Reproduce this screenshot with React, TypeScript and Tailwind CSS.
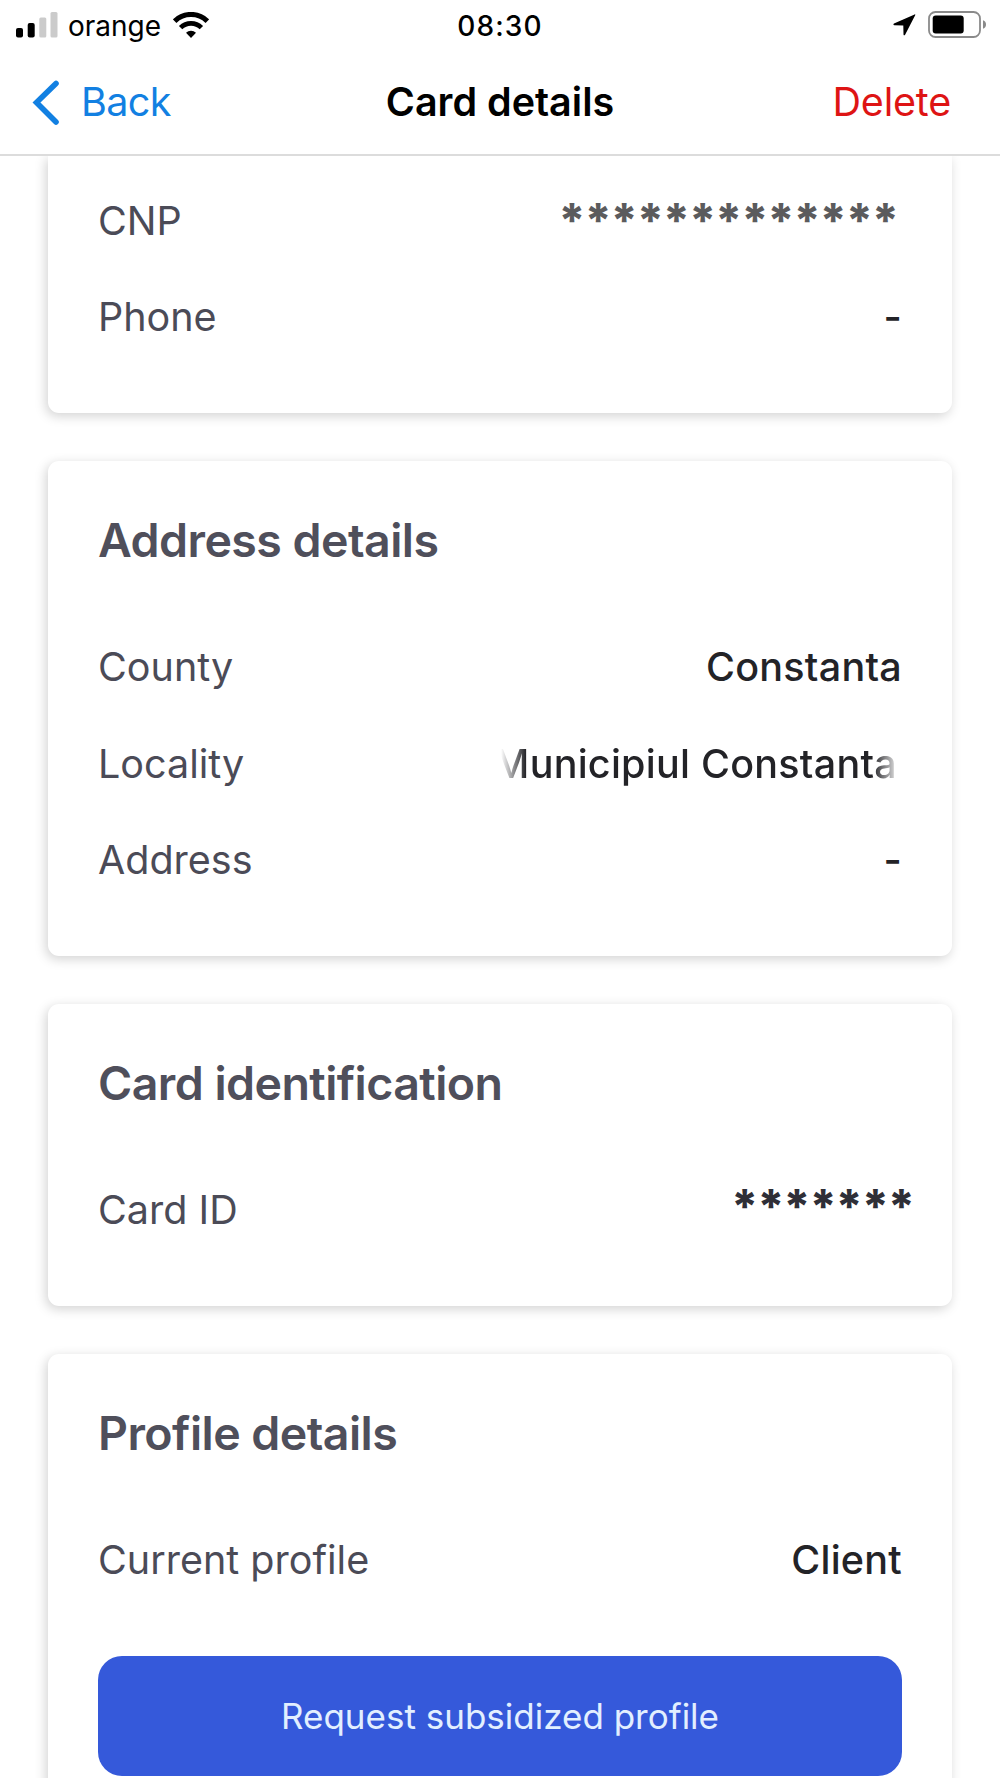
import type { ReactNode } from "react";

interface DetailRowProps {
  label: string;
  children: ReactNode;
}

function SignalIcon() {
  return (
    <svg width="42" height="26" viewBox="0 0 42 26">
      <rect x="0" y="16" width="7" height="9.5" rx="2" fill="#000" />
      <rect x="11.7" y="11" width="7" height="14.5" rx="2" fill="#000" />
      <rect x="23.3" y="5.5" width="7" height="20" rx="1.5" fill="#cbcbcb" />
      <rect x="34.5" y="0" width="7" height="25.5" rx="1.5" fill="#cbcbcb" />
    </svg>
  );
}

function WifiIcon() {
  return (
    <svg width="36" height="27" viewBox="0 0 36 27" fill="none" stroke="#000">
      <path d="M1.6 9.2a23.4 23.4 0 0 1 32.8 0" strokeWidth="5.2" />
      <path d="M7.6 15.6a14.8 14.8 0 0 1 20.8 0" strokeWidth="4.8" />
      <path d="M18 26l-5-5.2a7.4 7.4 0 0 1 10 0z" fill="#000" stroke="none" />
    </svg>
  );
}

function LocationIcon() {
  return (
    <svg width="23" height="22" viewBox="0 0 23 22">
      <path
        d="M21.6.4 1 9.6c-.9.5-.7 1.5.3 1.6l9 .2.2 9c.1 1 1.1 1.2 1.6.3L22.3 1.1c.2-.6-.2-.9-.7-.7z"
        fill="#000"
      />
    </svg>
  );
}

function BatteryIcon() {
  return (
    <svg width="59" height="28" viewBox="0 0 59 28">
      <rect x="1" y="1" width="51" height="25" rx="6.5" fill="none" stroke="#8a8a8a" strokeWidth="1.8" />
      <rect x="4.7" y="4.6" width="31" height="18" rx="3" fill="#000" />
      <path d="M55 9.2c2.3.8 3 2.6 3 4.3s-.7 3.5-3 4.300z" fill="#8a8a8a" />
    </svg>
  );
}

function DetailRow({ label, children }: DetailRowProps) {
  return (
    <div className="flex h-[96.5px] items-center justify-between pt-1">
      <span className="text-[39.5px] text-[#4b4b57]">{label}</span>
      {children}
    </div>
  );
}

function Value({ children }: { children: ReactNode }) {
  return <span className="text-[39.5px] font-medium tracking-[0.25px] text-[#232327]">{children}</span>;
}

// Long values fade out on both ends instead of being truncated
function FadedValue({ children }: { children: ReactNode }) {
  return (
    <span className="flex w-[420px] justify-end pr-[5px] [mask-image:linear-gradient(to_right,transparent_19px,black_44px,black_391px,transparent_418px)]">
      <Value>{children}</Value>
    </span>
  );
}

function Card({ title, children }: { title: string; children: ReactNode }) {
  return (
    <section className="rounded-[11px] bg-white px-[50px] pt-12 pb-[49px] shadow-[-2px_3px_12px_rgba(0,0,0,0.18)]">
      <h2 className="mb-12 flex h-[61px] items-center pt-[3px] text-[46.5px] font-semibold tracking-[-0.55px] text-[#4f4f5b]">
        {title}
      </h2>
      {children}
    </section>
  );
}

export default function App() {
  return (
    <div className="flex h-[1778px] w-[1000px] flex-col overflow-hidden bg-white font-['Inter',sans-serif] whitespace-nowrap">
      <header className="h-[156px] shrink-0 border-b-2 border-[#dcdcdc]">
        <div className="grid h-[50px] grid-cols-3 items-center">
          <div className="flex items-center pl-4">
            <SignalIcon />
            <span className="ml-2.5 pt-0.5 text-[28px]">orange</span>
            <span className="ml-3"><WifiIcon /></span>
          </div>
          <span className="pt-0.5 text-center text-[28px] font-medium tracking-[1.1px]">08:30</span>
          <div className="flex items-center justify-end pr-[13px]">
            <LocationIcon />
            <span className="ml-3"><BatteryIcon /></span>
          </div>
        </div>
        <div className="grid h-[104px] grid-cols-3 items-center pt-0.5 text-[39.5px]">
          <div className="flex items-center pl-8 text-[#1280e2]">
            <svg width="28" height="46" viewBox="0 0 28 46" fill="none" stroke="currentColor" strokeWidth="5.6" strokeLinecap="round">
              <path d="M24 3.5 4.5 22.5l19.5 19.5" />
            </svg>
            <span className="ml-[21px] tracking-[-0.6px]">Back</span>
          </div>
          <h1 className="text-center font-semibold">Card details</h1>
          <span className="pr-[49px] text-right tracking-[-0.2px] text-[#de1414]">Delete</span>
        </div>
      </header>

      <main className="flex min-h-0 flex-1 flex-col gap-[47.5px] overflow-hidden px-12">
        <section className="rounded-b-[11px] bg-white px-[50px] pt-[15px] pb-[49px] shadow-[-2px_3px_12px_rgba(0,0,0,0.18)]">
          <DetailRow label="CNP">
            <span className="mr-1 pb-0.5 text-[47px] font-extrabold tracking-[-1.25px] text-[#5b5b5d]">*************</span>
          </DetailRow>
          <DetailRow label="Phone"><Value>-</Value></DetailRow>
        </section>

        <Card title="Address details">
          <DetailRow label="County"><Value>Constanta</Value></DetailRow>
          <DetailRow label="Locality"><FadedValue>Municipiul Constanta</FadedValue></DetailRow>
          <DetailRow label="Address"><Value>-</Value></DetailRow>
        </Card>

        <Card title="Card identification">
          <DetailRow label="Card ID">
            <span className="-mr-3 pb-[9px] text-[47px] font-extrabold tracking-[-1.25px] text-[#2f2f37]">*******</span>
          </DetailRow>
        </Card>

        <Card title="Profile details">
          <DetailRow label="Current profile"><Value>Client</Value></DetailRow>
          <button className="mt-[49px] h-[120px] w-full rounded-[24px] bg-[#3559da] text-[35px] text-[#e2efff]">
            Request subsidized profile
          </button>
        </Card>
      </main>
    </div>
  );
}
